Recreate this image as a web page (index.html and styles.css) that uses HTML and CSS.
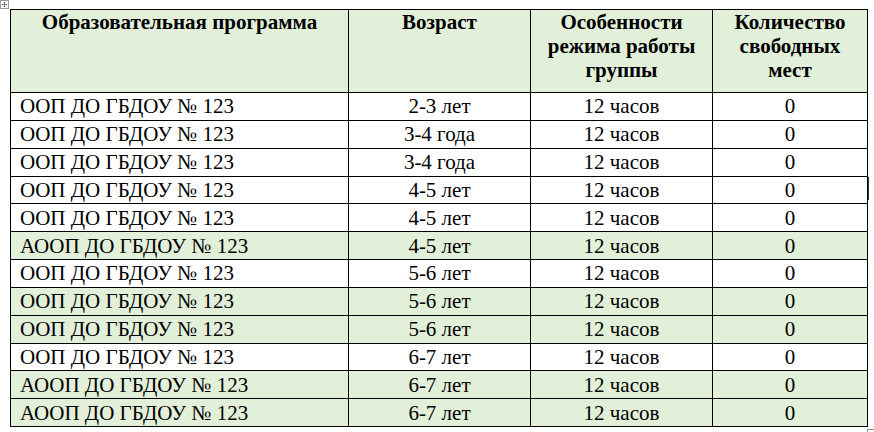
FILE: index.html
```html
<!DOCTYPE html>
<html lang="ru">
<head>
<meta charset="utf-8">
<link rel="stylesheet" href="styles.css">
</head>
<body>
<div class="page">
  <div class="handle">
    <svg width="9" height="9" viewBox="0 0 9 9"><path d="M4.5 1.5v6M1.5 4.5h6M3.5 2.5l1-1 1 1M3.5 6.5l1 1 1-1M2.5 3.5l-1 1 1 1M6.5 3.5l1 1-1 1" stroke="#555" stroke-width="0.9" fill="none"/></svg>
  </div>
  <div class="cursor-mark"></div>
  <div class="resize-mark"></div>
  <table class="grid">
    <colgroup>
      <col class="c1"><col class="c2"><col class="c3"><col class="c4">
    </colgroup>
    <thead>
      <tr class="head">
        <th>Образовательная программа</th>
        <th>Возраст</th>
        <th>Особенности режима работы группы</th>
        <th>Количество свободных мест</th>
      </tr>
    </thead>
    <tbody>
      <tr><td class="name">ООП ДО ГБДОУ № 123</td><td>2-3 лет</td><td>12 часов</td><td>0</td></tr>
      <tr><td class="name">ООП ДО ГБДОУ № 123</td><td>3-4 года</td><td>12 часов</td><td>0</td></tr>
      <tr><td class="name">ООП ДО ГБДОУ № 123</td><td>3-4 года</td><td>12 часов</td><td>0</td></tr>
      <tr><td class="name">ООП ДО ГБДОУ № 123</td><td>4-5 лет</td><td>12 часов</td><td>0</td></tr>
      <tr><td class="name">ООП ДО ГБДОУ № 123</td><td>4-5 лет</td><td>12 часов</td><td>0</td></tr>
      <tr class="green"><td class="name">АООП ДО ГБДОУ № 123</td><td>4-5 лет</td><td>12 часов</td><td>0</td></tr>
      <tr><td class="name">ООП ДО ГБДОУ № 123</td><td>5-6 лет</td><td>12 часов</td><td>0</td></tr>
      <tr class="green"><td class="name">ООП ДО ГБДОУ № 123</td><td>5-6 лет</td><td>12 часов</td><td>0</td></tr>
      <tr class="green"><td class="name">ООП ДО ГБДОУ № 123</td><td>5-6 лет</td><td>12 часов</td><td>0</td></tr>
      <tr><td class="name">ООП ДО ГБДОУ № 123</td><td>6-7 лет</td><td>12 часов</td><td>0</td></tr>
      <tr class="green"><td class="name">АООП ДО ГБДОУ № 123</td><td>6-7 лет</td><td>12 часов</td><td>0</td></tr>
      <tr class="green"><td class="name">АООП ДО ГБДОУ № 123</td><td>6-7 лет</td><td>12 часов</td><td>0</td></tr>
    </tbody>
  </table>
</div>
</body>
</html>
```
FILE: styles.css
```css
html, body {
  margin: 0;
  padding: 0;
  background: #ffffff;
  font-family: "Liberation Serif", "Times New Roman", serif;
}
.page {
  position: relative;
  width: 874px;
  height: 432px;
  padding: 9px 0 0 10px;
  box-sizing: border-box;
  color: #000;
}
.handle {
  position: absolute;
  left: 0;
  top: 0;
  width: 9px;
  height: 9px;
  border: 1px solid #9a9a9a;
  box-sizing: border-box;
  background: #fff;
  display: flex;
  align-items: center;
  justify-content: center;
}
.handle svg {
  display: block;
}
.cursor-mark {
  position: absolute;
  left: 868px;
  top: 177px;
  width: 1px;
  height: 23px;
  background: #333;
}
.resize-mark {
  position: absolute;
  left: 867px;
  top: 429px;
  width: 6px;
  height: 3px;
  border-top: 1px solid #8a8a8a;
  border-left: 1px solid #8a8a8a;
}
.grid {
  border-collapse: collapse;
  table-layout: fixed;
  width: 857px;
  font-family: "Liberation Serif", "Times New Roman", serif;
}
.c1 { width: 338px; }
.c2 { width: 182px; }
.c3 { width: 182px; }
.c4 { width: 155px; }
.grid th,
.grid td {
  font-family: "Liberation Serif", "Times New Roman", serif;
  border: 1px solid #000;
  padding: 0 8px;
  text-align: center;
}
.head th {
  height: 83px;
  box-sizing: border-box;
  vertical-align: top;
  background: #e2efd9;
  font-weight: bold;
  font-size: 21px;
  line-height: 24px;
  padding-top: 0;
}
.grid td {
  height: 27.85px;
  box-sizing: border-box;
  font-size: 21px;
  line-height: 26px;
  vertical-align: middle;
}
.grid td.name {
  text-align: left;
  padding-left: 9px;
}
.green td {
  background: #e2efd9;
}
```
